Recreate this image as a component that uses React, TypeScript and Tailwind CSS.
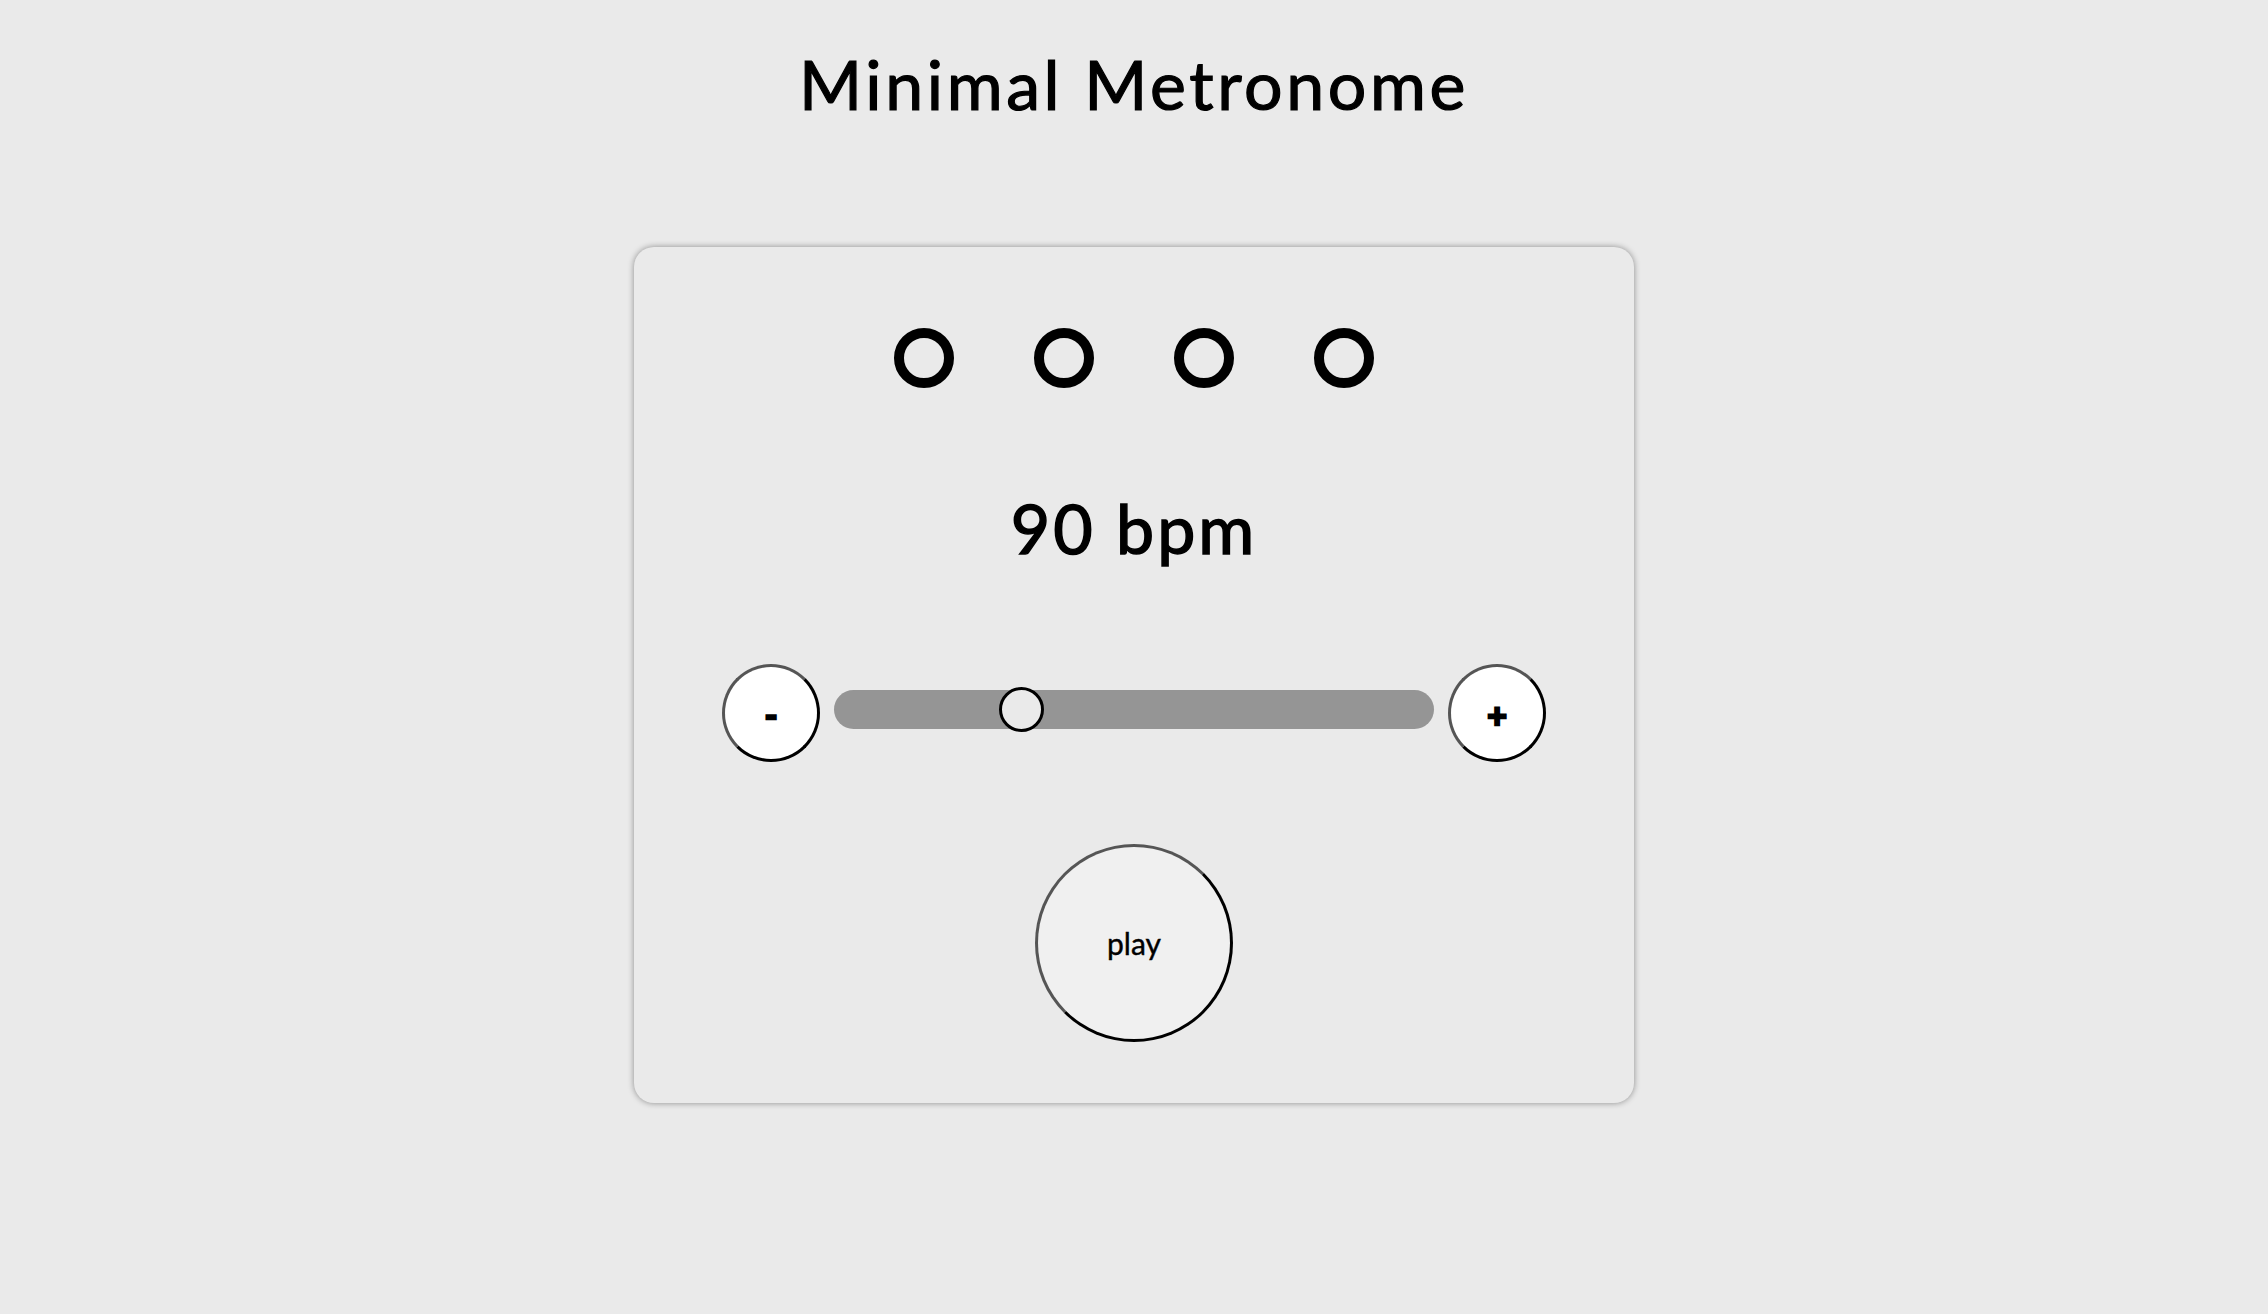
import React from "react";

const FONT = { fontFamily: "Lato, 'Open Sans', sans-serif" };

function Dot() {
  return <div className="w-[60px] h-[60px] rounded-full border-[10px] border-black box-border" />;
}

function RoundButton({ label }: { label: string }) {
  return (
    <button
      className="w-[98px] h-[98px] shrink-0 rounded-full bg-white border-[3px] border-t-[#555555] border-l-[#555555] border-b-black border-r-black flex items-center justify-center text-black font-bold text-[34px] leading-none [-webkit-text-stroke:2.5px_black]"
      style={FONT}
    >
      <span className="translate-y-[2px]">{label}</span>
    </button>
  );
}

export default function App() {
  return (
    <div className="min-h-[1314px] w-full bg-[#eaeaea] flex flex-col items-center text-black" style={FONT}>
      <h1 className="pt-[50px] text-[68px] leading-[68px] font-normal tracking-[3.6px] [-webkit-text-stroke:1.2px_black]">
        Minimal Metronome
      </h1>
      <div className="mt-[129px] w-[1000px] h-[856px] rounded-[20px] bg-[#eaeaea] shadow-[0_0_6px_rgba(0,0,0,0.4)] flex flex-col items-center">
        <div className="mt-[81px] h-[60px] flex gap-[80px]">
          <Dot />
          <Dot />
          <Dot />
          <Dot />
        </div>
        <div className="mt-[106px] text-[68px] leading-[68px] font-normal tracking-[3px] [-webkit-text-stroke:1.5px_black]">
          90 bpm
        </div>
        <div className="mt-[102px] h-[98px] w-[824px] flex items-start gap-[14px]">
          <RoundButton label="-" />
          <div className="relative mt-[26px] h-[39px] flex-1 rounded-full bg-[#959595]">
            <div className="absolute left-[165px] top-[-3px] w-[45px] h-[45px] rounded-full bg-[#eaeaea] border-[3px] border-black" />
          </div>
          <RoundButton label="+" />
        </div>
        <button
          className="mt-[82px] w-[198px] h-[198px] rounded-full bg-[#f0f0f0] border-[3px] border-t-[#555555] border-l-[#555555] border-b-black border-r-black flex items-center justify-center text-[30px] leading-none text-black [-webkit-text-stroke:0.4px_black]"
          style={FONT}
        >
          play
        </button>
      </div>
    </div>
  );
}
